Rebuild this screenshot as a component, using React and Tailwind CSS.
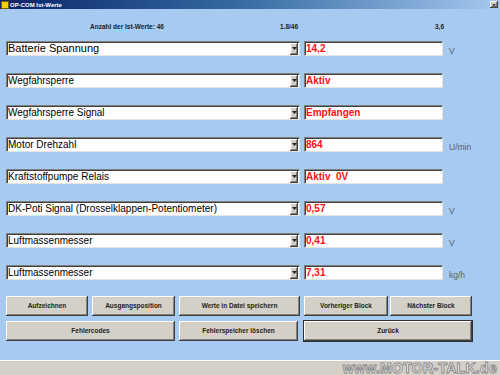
const rows = [
  { label: 'Batterie Spannung', value: '14,2', unit: 'V', big: true },
  { label: 'Wegfahrsperre', value: 'Aktiv', unit: '' },
  { label: 'Wegfahrsperre Signal', value: 'Empfangen', unit: '' },
  { label: 'Motor Drehzahl', value: '864', unit: 'U/min' },
  { label: 'Kraftstoffpumpe Relais', value: 'Aktiv  0V', unit: '' },
  { label: 'DK-Poti Signal (Drosselklappen-Potentiometer)', value: '0,57', unit: 'V' },
  { label: 'Luftmassenmesser', value: '0,41', unit: 'V' },
  { label: 'Luftmassenmesser', value: '7,31', unit: 'kg/h' },
];

const raised =
  'bg-[#d4d0c8] shadow-[inset_-1px_-1px_#404040,inset_1px_1px_#ffffff,inset_-2px_-2px_#808080]';
const sunken =
  'bg-white border-t border-l border-[#808080] border-r border-b border-r-[#e6e4df] border-b-[#e6e4df] shadow-[inset_1px_1px_#404040]';

function Btn({ w, children, def }) {
  return (
    <div
      className={`${w} h-[20px] flex items-center justify-center text-[6.5px] font-bold text-[#222] ${raised} ${
        def ? 'outline outline-1 outline-[#303030]' : ''
      }`}
    >
      {children}
    </div>
  );
}

function Row({ label, value, unit, big }) {
  return (
    <div className="flex items-end h-[15px]">
      <div className={`ml-[6px] w-[294px] h-[15px] flex items-center ${sunken}`}>
        <span className={`flex-1 pl-[1px] text-black truncate ${big ? 'text-[11px]' : 'text-[10px]'}`}>
          {label}
        </span>
        <div className={`w-[8px] h-[12px] mr-[1px] flex items-center justify-center ${raised}`}>
          <svg width="5" height="3" viewBox="0 0 5 3">
            <path d="M0 0h5L2.5 3z" fill="#222" />
          </svg>
        </div>
      </div>
      <div className={`ml-[4px] w-[139px] h-[15px] flex items-center ${sunken}`}>
        <span className="pl-[1px] text-[10px] font-bold text-[#ff1010] whitespace-pre">{value}</span>
      </div>
      <span className="ml-[6px] text-[8.5px] leading-none text-[#5a6070] mb-[1px]">{unit}</span>
    </div>
  );
}

export default function App() {
  return (
    <div
      className="w-[500px] h-[375px] flex flex-col bg-[#a6caf0] overflow-hidden"
      style={{ fontFamily: '"Liberation Sans", Arial, sans-serif' }}
    >
      <div className="h-[9px] flex items-center bg-gradient-to-r from-[#0a246a] via-[#3a6ea5] to-[#a6caf0]">
        <div className="w-[8px] h-[8px] ml-[1px] bg-[#f0d000] border border-[#806000]" />
        <span className="ml-[1px] text-[6px] leading-none font-bold text-white">OP-COM Ist-Werte</span>
        <div className={`ml-auto mr-[2px] w-[8px] h-[7px] flex items-center justify-center text-[6px] leading-none font-bold text-black ${raised}`}>
          ×
        </div>
      </div>

      <div className="h-[32px] flex items-center text-[6.5px] font-bold text-[#222] pt-[3px]">
        <span className="w-[280px] pl-[90px]">Anzahl der Ist-Werte: 46</span>
        <span className="w-[155px]">1.8/46</span>
        <span>3,6</span>
      </div>

      <div className="flex flex-col gap-[17px]">
        {rows.map((r, i) => (
          <Row key={i} {...r} />
        ))}
      </div>

      <div className="mt-[16px] ml-[6px] flex flex-col gap-[5px]">
        <div className="flex">
          <Btn w="w-[82px]">Aufzeichnen</Btn>
          <div className="w-[4px]" />
          <Btn w="w-[83px]">Ausgangsposition</Btn>
          <div className="w-[4px]" />
          <Btn w="w-[121px]">Werte in Datei speichern</Btn>
          <div className="w-[4px]" />
          <Btn w="w-[84px]">Vorheriger Block</Btn>
          <div className="w-[2px]" />
          <Btn w="w-[82px]">Nächster Block</Btn>
        </div>
        <div className="flex">
          <Btn w="w-[169px]">Fehlercodes</Btn>
          <div className="w-[4px]" />
          <Btn w="w-[119px]">Fehlerspeicher löschen</Btn>
          <div className="w-[6px]" />
          <Btn w="w-[168px]" def>
            Zurück
          </Btn>
        </div>
      </div>

      <div className="mt-auto h-[15px] bg-[#d4d0c8] border-t border-[#ffffff] flex items-center justify-end pr-[3px]">
        <span className="text-[14px] leading-none font-bold text-white tracking-[0.3px] [-webkit-text-stroke:1px_#8a8a8a]">
          www.MOTOR-TALK.de
        </span>
      </div>
    </div>
  );
}
